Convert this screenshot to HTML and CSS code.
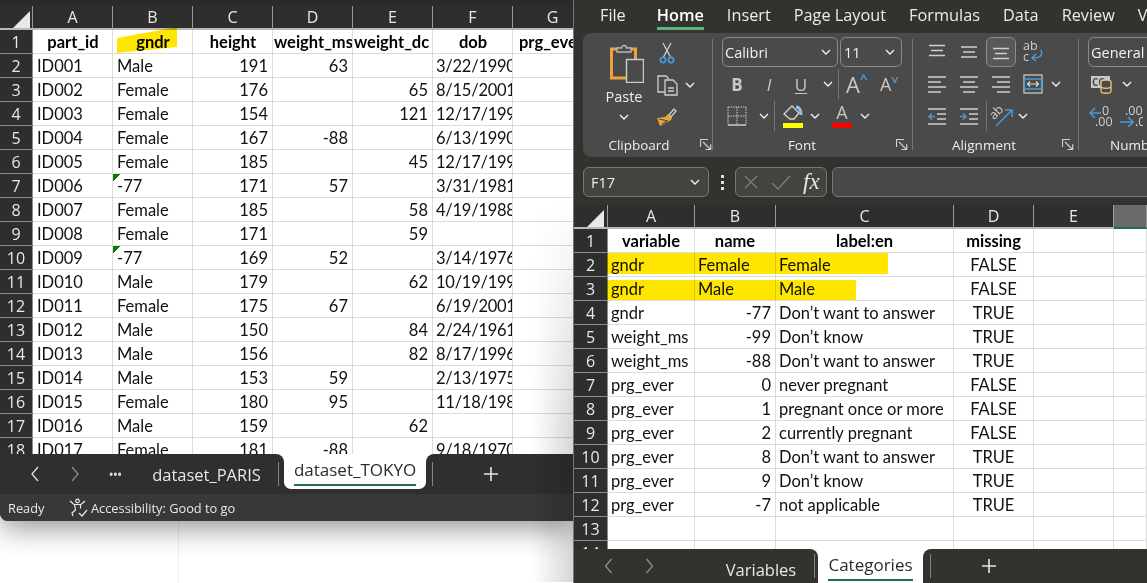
FILE: index.html
```html
<!DOCTYPE html>
<html lang="en">
<head>
  <meta charset="UTF-8">
  <title>Excel windows</title>
  <link rel="stylesheet" href="styles.css">
</head>
<body>

<svg class="defs" aria-hidden="true">
  <symbol id="chev" viewBox="0 0 10 6"><path d="M1 1l4 4 4-4" fill="none" stroke="#f0f0f0" stroke-width="1.4"/></symbol>
  <symbol id="launch" viewBox="0 0 12 12"><path d="M.5 8V.5H8M3 3l7 7M5.5 10.5h5.2V5.3" fill="none" stroke="#d0d0d0" stroke-width="1.2"/></symbol>
  <symbol id="lines-top" viewBox="0 0 20 16"><path d="M2 1.5h16M4 6.5h12M2 11.5h16" stroke="#cfcfcf" stroke-width="1.5"/></symbol>
  <symbol id="lines-mid" viewBox="0 0 20 16"><path d="M2 3h16M4 8h12M2 13h16" stroke="#cfcfcf" stroke-width="1.5"/></symbol>
  <symbol id="lines-bot" viewBox="0 0 20 16"><path d="M2 4.5h16M4 9.5h12M2 14.5h16" stroke="#cfcfcf" stroke-width="1.5"/></symbol>
  <symbol id="al-left" viewBox="0 0 20 18"><path d="M1 2h18M1 7h13M1 12h18M1 17h13" stroke="#cfcfcf" stroke-width="1.5"/></symbol>
  <symbol id="al-center" viewBox="0 0 20 18"><path d="M1 2h18M4 7h12M1 12h18M4 17h12" stroke="#cfcfcf" stroke-width="1.5"/></symbol>
  <symbol id="al-right" viewBox="0 0 20 18"><path d="M1 2h18M6 7h13M1 12h18M6 17h13" stroke="#cfcfcf" stroke-width="1.5"/></symbol>
  <symbol id="nav-l" viewBox="0 0 10 16"><path d="M8 1L2 8l6 7" fill="none" stroke="currentColor" stroke-width="1.3"/></symbol>
  <symbol id="nav-r" viewBox="0 0 10 16"><path d="M2 1l6 7-6 7" fill="none" stroke="currentColor" stroke-width="1.3"/></symbol>
  <symbol id="plus" viewBox="0 0 16 16"><path d="M8 1v14M1 8h14" stroke="#e6e6e6" stroke-width="1.6"/></symbol>
</svg>

<div class="desktop">

  <!-- left window, dataset sheet -->
  <section class="left-pane">
    <div class="book">
      <div class="sheet sheet-left">
        <div class="corner"></div>
        <div class="marker"></div>
        <table class="grid">
          <colgroup><col class="col-rh"><col class="col-80"><col class="col-80"><col class="col-80"><col class="col-80"><col class="col-80"><col class="col-80"><col class="col-80"></colgroup>
          <tr class="heads"><th></th><th>A</th><th>B</th><th>C</th><th>D</th><th>E</th><th>F</th><th>G</th></tr>
          <tr><th>1</th><td class="hd">part_id</td><td class="hd">gndr</td><td class="hd">height</td><td class="hd tight">weight_ms</td><td class="hd tight">weight_dc</td><td class="hd">dob</td><td class="hd tight pad">prg_ever</td></tr>
          <tr><th>2</th><td>ID001</td><td>Male</td><td class="n">191</td><td class="n">63</td><td></td><td class="d">3/22/1990</td><td></td></tr>
          <tr><th>3</th><td>ID002</td><td>Female</td><td class="n">176</td><td></td><td class="n">65</td><td class="d">8/15/2001</td><td></td></tr>
          <tr><th>4</th><td>ID003</td><td>Female</td><td class="n">154</td><td></td><td class="n">121</td><td class="d">12/17/1994</td><td></td></tr>
          <tr><th>5</th><td>ID004</td><td>Female</td><td class="n">167</td><td class="n">-88</td><td></td><td class="d">6/13/1990</td><td></td></tr>
          <tr><th>6</th><td>ID005</td><td>Female</td><td class="n">185</td><td></td><td class="n">45</td><td class="d">12/17/1994</td><td></td></tr>
          <tr><th>7</th><td>ID006</td><td class="flag">-77</td><td class="n">171</td><td class="n">57</td><td></td><td class="d">3/31/1981</td><td></td></tr>
          <tr><th>8</th><td>ID007</td><td>Female</td><td class="n">185</td><td></td><td class="n">58</td><td class="d">4/19/1988</td><td></td></tr>
          <tr><th>9</th><td>ID008</td><td>Female</td><td class="n">171</td><td></td><td class="n">59</td><td></td><td></td></tr>
          <tr><th>10</th><td>ID009</td><td class="flag">-77</td><td class="n">169</td><td class="n">52</td><td></td><td class="d">3/14/1976</td><td></td></tr>
          <tr><th>11</th><td>ID010</td><td>Male</td><td class="n">179</td><td></td><td class="n">62</td><td class="d">10/19/1995</td><td></td></tr>
          <tr><th>12</th><td>ID011</td><td>Female</td><td class="n">175</td><td class="n">67</td><td></td><td class="d">6/19/2001</td><td></td></tr>
          <tr><th>13</th><td>ID012</td><td>Male</td><td class="n">150</td><td></td><td class="n">84</td><td class="d">2/24/1961</td><td></td></tr>
          <tr><th>14</th><td>ID013</td><td>Male</td><td class="n">156</td><td></td><td class="n">82</td><td class="d">8/17/1996</td><td></td></tr>
          <tr><th>15</th><td>ID014</td><td>Male</td><td class="n">153</td><td class="n">59</td><td></td><td class="d">2/13/1975</td><td></td></tr>
          <tr><th>16</th><td>ID015</td><td>Female</td><td class="n">180</td><td class="n">95</td><td></td><td class="d">11/18/1987</td><td></td></tr>
          <tr><th>17</th><td>ID016</td><td>Male</td><td class="n">159</td><td></td><td class="n">62</td><td></td><td></td></tr>
          <tr><th>18</th><td>ID017</td><td>Female</td><td class="n">181</td><td class="n">-88</td><td></td><td class="d">9/18/1970</td><td></td></tr>
        </table>
      </div>

      <div class="tabs tabs-left">
        <div class="tab-side side-a">
          <svg class="nav"><use href="#nav-l"/></svg>
          <svg class="nav nav-dim"><use href="#nav-r"/></svg>
          <span class="more">•••</span>
          <span class="tab tab-paris">dataset_PARIS</span>
          <i class="tab-sep"></i>
        </div>
        <div class="tab-on tokyo"><span>dataset_TOKYO</span></div>
        <div class="tab-side side-b">
          <i class="tab-sep"></i>
          <svg class="plus"><use href="#plus"/></svg>
        </div>
      </div>

      <div class="status">
        <span class="ready">Ready</span>
        <svg class="a11y" viewBox="0 0 20 20" fill="none" stroke="#e8e8e8" stroke-width="1.2">
          <circle cx="8.5" cy="3" r="1.8"/>
          <path d="M1 3l4 3.5h7L16 3M5.5 6.5L6.5 12 3 15l1 3M11.5 6.5v4"/>
          <path d="M10 15l3 3 5-6"/>
        </svg>
        <span>Accessibility: Good to go</span>
      </div>
      <div class="edge-shade"></div>
    </div>
  </section>

  <!-- right window, codebook sheet -->
  <section class="right-pane">
    <nav class="menu">
      <span>File</span>
      <span class="menu-on">Home</span>
      <span>Insert</span>
      <span>Page Layout</span>
      <span>Formulas</span>
      <span>Data</span>
      <span>Review</span>
      <span>View</span>
    </nav>

    <div class="ribbon">

      <div class="group g-clip">
        <div class="clip-body">
          <div class="paste">
            <svg class="paste-ic" viewBox="0 0 34 40">
              <rect x="1.5" y="6" width="24" height="29" fill="none" stroke="#e9a53c" stroke-width="3"/>
              <path d="M7 9V5h4.5a2.5 2.5 0 0 1 5 0H21v4z" fill="#4a4a4a" stroke="#b8b8b8" stroke-width="1.3"/>
              <rect x="16.5" y="16.500" width="17" height="23" fill="#4a4a4a" stroke="#c8c8c8" stroke-width="1.5"/>
            </svg>
            <span>Paste</span>
            <svg class="chev"><use href="#chev"/></svg>
          </div>
          <div class="clip-tools">
            <div class="row">
              <svg class="tool-ic" width="24" height="22" viewBox="0 0 24 22" fill="none">
                <path d="M8 1l7.500 14M16 1L8.500 15" stroke="#cfcfcf" stroke-width="1.300"/>
                <circle cx="8" cy="18" r="2.600" stroke="#4a9ad8" stroke-width="1.600"/>
                <circle cx="16" cy="18" r="2.600" stroke="#4a9ad8" stroke-width="1.600"/>
              </svg>
            </div>
            <div class="row">
              <svg class="tool-ic" width="24" height="22" viewBox="0 0 24 22" fill="none" stroke="#cfcfcf" stroke-width="1.300">
                <path d="M11 18H3V2h8l3 3"/>
                <path d="M10 6h8l4 4v11H10z" fill="#4a4a4a"/>
                <path d="M13 14h6M13 17h6"/>
              </svg>
              <svg class="chev chev-r"><use href="#chev"/></svg>
            </div>
            <div class="row">
              <svg class="tool-ic" width="24" height="22" viewBox="0 0 24 22">
                <path d="M14 9l5-6 2 2-5 6z" fill="none" stroke="#cfcfcf" stroke-width="1.300"/>
                <path d="M13 8l4 4-1 2-11 6-3-8 8-1z" fill="#e9a53c"/>
                <path d="M4 13l9 2M7 18l5-3" stroke="#4a4a4a"/>
              </svg>
            </div>
          </div>
        </div>
        <div class="group-foot">
          <span class="foot-label w-clip">Clipboard</span>
          <svg class="launch"><use href="#launch"/></svg>
        </div>
      </div>

      <div class="group g-font">
        <div class="row font-pick">
          <div class="pick pick-font"><span>Calibri</span><svg class="chev"><use href="#chev"/></svg></div>
          <div class="pick pick-size"><span>11</span><svg class="chev"><use href="#chev"/></svg></div>
        </div>
        <div class="row row-tools">
          <span class="tool tx-b">B</span>
          <span class="tool tx-i">I</span>
          <span class="tool tx-u">U</span>
          <svg class="chev chev-r"><use href="#chev"/></svg>
          <i class="vline vl-font"></i>
          <span class="tool tx-a big">A<b>^</b></span>
          <span class="tool tx-a small">A<b class="down">^</b></span>
        </div>
        <div class="row row-tools">
          <span class="tool">
            <svg width="20" height="20" viewBox="0 0 20 20" fill="none" stroke="#cfcfcf" stroke-dasharray="1.500 1"><path d="M1 1h18M1 10h18M1 1v18M10 1v18M19 1v18"/><path d="M1 19h18" stroke-dasharray="none" stroke-width="1.500"/></svg>
          </span>
          <svg class="chev chev-r"><use href="#chev"/></svg>
          <i class="vline vl-fill"></i>
          <span class="tool tool-bar">
            <svg width="22" height="16" viewBox="0 0 22 16" fill="none" stroke="#d4d4d4" stroke-width="1.300"><path d="M2 9l8-8 7 7-5 6H8z"/><path d="M14 2c3 0 5 3 5 8" stroke="#8fc0e8" stroke-width="3"/></svg>
            <i class="bar bar-yellow"></i>
          </span>
          <svg class="chev chev-fill"><use href="#chev"/></svg>
          <span class="tool tool-bar color-a">
            <span class="tx-color">A</span>
            <i class="bar bar-red"></i>
          </span>
          <svg class="chev chev-color"><use href="#chev"/></svg>
        </div>
        <div class="group-foot">
          <span class="foot-label w-font">Font</span>
          <svg class="launch"><use href="#launch"/></svg>
        </div>
      </div>

      <div class="group g-align">
        <div class="row row-align">
          <span class="tool"><svg width="20" height="16"><use href="#lines-top"/></svg></span>
          <span class="tool"><svg width="20" height="16"><use href="#lines-mid"/></svg></span>
          <span class="tool tool-sel"><svg width="20" height="16"><use href="#lines-bot"/></svg></span>
          <span class="tool">
            <svg width="22" height="22" viewBox="0 0 22 22" fill="none">
              <text x="1" y="9" class="svg-tx">ab</text>
              <text x="1" y="20" class="svg-tx">c</text>
              <path d="M19 9c2 6-1 8-9 8M14 13l-4 4 4 3" stroke="#4a9ad8" stroke-width="1.500"/>
            </svg>
          </span>
        </div>
        <div class="row row-align">
          <span class="tool"><svg width="20" height="18"><use href="#al-left"/></svg></span>
          <span class="tool"><svg width="20" height="18"><use href="#al-center"/></svg></span>
          <span class="tool"><svg width="20" height="18"><use href="#al-right"/></svg></span>
          <span class="tool">
            <svg width="20" height="20" viewBox="0 0 20 20" fill="none">
              <path d="M1 1h18v18H1z" stroke="#b8b8b8" stroke-width="1.500"/>
              <path d="M1.500 5h17v10h-17z" stroke="#4a9ad8" stroke-width="1.500"/>
              <path d="M5 10h10M7 7.500L4.500 10 7 12.500M13 7.500l2.500 2.500-2.500 2.500" stroke="#e0e0e0" stroke-width="1.100"/>
            </svg>
          </span>
          <svg class="chev chev-merge"><use href="#chev"/></svg>
        </div>
        <div class="row row-align">
          <span class="tool">
            <svg width="20" height="18" viewBox="0 0 20 18" fill="none">
              <path d="M1 2h18M10 7h9M10 12h9M1 17h18" stroke="#cfcfcf" stroke-width="1.500"/>
              <path d="M8 9.500H2M5 6.500l-3 3 3 3" stroke="#4a9ad8" stroke-width="1.500"/>
            </svg>
          </span>
          <span class="tool">
            <svg width="20" height="18" viewBox="0 0 20 18" fill="none">
              <path d="M1 2h18M10 7h9M10 12h9M1 17h18" stroke="#cfcfcf" stroke-width="1.500"/>
              <path d="M1 9.500h6M4 6.500l3 3-3 3" stroke="#4a9ad8" stroke-width="1.500"/>
            </svg>
          </span>
          <i class="vline vl-align"></i>
          <span class="tool tool-orient">
            <svg width="24" height="24" viewBox="0 0 24 24" fill="none">
              <text x="0" y="13" class="svg-tx" transform="rotate(-45 6 10)">ab</text>
              <path d="M6 22L22 6M15 6h7v7" stroke="#4a9ad8" stroke-width="1.500"/>
            </svg>
          </span>
          <svg class="chev chev-orient"><use href="#chev"/></svg>
        </div>
        <div class="group-foot">
          <span class="foot-label w-align">Alignment</span>
          <svg class="launch"><use href="#launch"/></svg>
        </div>
      </div>

      <div class="group g-num">
        <div class="row"><div class="pick pick-num"><span>General</span></div></div>
        <div class="row row-num">
          <span class="tool tool-num">
            <svg width="22" height="20" viewBox="0 0 22 20" fill="none">
              <rect x="1" y="2" width="19" height="12" fill="#c8c8c8"/>
              <text x="2" y="12" class="svg-tx dark">CC</text>
              <ellipse cx="16" cy="8" rx="5" ry="2" fill="#4a4a4a" stroke="#f0c674" stroke-width="1.300"/>
              <path d="M11 8v9c0 3 10 3 10 0V8M11 12c0 3 10 3 10 0" fill="#4a4a4a" stroke="#f0c674" stroke-width="1.300"/>
            </svg>
          </span>
          <svg class="chev chev-num"><use href="#chev"/></svg>
        </div>
        <div class="row row-num">
          <span class="tool tool-num">
            <svg width="24" height="22" viewBox="0 0 24 22" fill="none">
              <path d="M12 8H2M6 3L1 8l5 5" stroke="#4a9ad8" stroke-width="1.500"/>
              <text x="13" y="10" class="svg-tx">0</text>
              <text x="6" y="21" class="svg-tx">.00</text>
            </svg>
          </span>
          <span class="tool tool-num second">
            <svg width="24" height="22" viewBox="0 0 24 22" fill="none">
              <text x="6" y="10" class="svg-tx">.00</text>
              <path d="M1 17h12M9 12l5 5-5 5" stroke="#4a9ad8" stroke-width="1.500"/>
              <text x="16" y="21" class="svg-tx">.0</text>
            </svg>
          </span>
        </div>
        <div class="group-foot num-foot"><span>Number</span></div>
      </div>
    </div>

    <div class="fbar">
      <div class="namebox"><span>F17</span><svg class="chev"><use href="#chev"/></svg></div>
      <div class="dots"><i></i><i></i><i></i></div>
      <div class="fx-box">
        <svg width="16" height="16" viewBox="0 0 18 18"><path d="M2 2l14 14M16 2L2 16" stroke="#7d7d7d" stroke-width="1.400"/></svg>
        <svg width="20" height="18" viewBox="0 0 20 18"><path d="M1 10l6 6L19 3" fill="none" stroke="#7d7d7d" stroke-width="1.400"/></svg>
        <span class="fx">fx</span>
      </div>
      <div class="finput"></div>
    </div>

    <div class="sheet sheet-right">
      <div class="corner"></div>
      <i class="paint paint-a"></i>
      <i class="paint paint-b"></i>
      <table class="grid">
        <colgroup><col class="col-rh-r"><col class="col-a"><col class="col-b"><col class="col-c"><col class="col-80"><col class="col-80"><col class="col-f"></colgroup>
        <tr class="heads"><th></th><th>A</th><th>B</th><th>C</th><th>D</th><th>E</th><th class="head-sel"></th></tr>
        <tr><th>1</th><td class="hd">variable</td><td class="hd">name</td><td class="hd">label:en</td><td class="hd">missing</td><td></td><td></td></tr>
        <tr><th>2</th><td>gndr</td><td>Female</td><td>Female</td><td class="c">FALSE</td><td></td><td></td></tr>
        <tr><th>3</th><td>gndr</td><td>Male</td><td>Male</td><td class="c">FALSE</td><td></td><td></td></tr>
        <tr><th>4</th><td>gndr</td><td class="n">-77</td><td>Don’t want to answer</td><td class="c">TRUE</td><td></td><td></td></tr>
        <tr><th>5</th><td>weight_ms</td><td class="n">-99</td><td>Don’t know</td><td class="c">TRUE</td><td></td><td></td></tr>
        <tr><th>6</th><td>weight_ms</td><td class="n">-88</td><td>Don’t want to answer</td><td class="c">TRUE</td><td></td><td></td></tr>
        <tr><th>7</th><td>prg_ever</td><td class="n">0</td><td>never pregnant</td><td class="c">FALSE</td><td></td><td></td></tr>
        <tr><th>8</th><td>prg_ever</td><td class="n">1</td><td>pregnant once or more</td><td class="c">FALSE</td><td></td><td></td></tr>
        <tr><th>9</th><td>prg_ever</td><td class="n">2</td><td>currently pregnant</td><td class="c">FALSE</td><td></td><td></td></tr>
        <tr><th>10</th><td>prg_ever</td><td class="n">8</td><td>Don’t want to answer</td><td class="c">TRUE</td><td></td><td></td></tr>
        <tr><th>11</th><td>prg_ever</td><td class="n">9</td><td>Don’t know</td><td class="c">TRUE</td><td></td><td></td></tr>
        <tr><th>12</th><td>prg_ever</td><td class="n">-7</td><td>not applicable</td><td class="c">TRUE</td><td></td><td></td></tr>
        <tr><th>13</th><td></td><td></td><td></td><td></td><td></td><td></td></tr>
        <tr><th>14</th><td></td><td></td><td></td><td></td><td></td><td></td></tr>
      </table>
    </div>

    <div class="tabs tabs-right">
      <div class="tab-side side-c">
        <svg class="nav nav-dim"><use href="#nav-l"/></svg>
        <svg class="nav nav-dim"><use href="#nav-r"/></svg>
        <span class="tab tab-vars">Variables</span>
        <i class="tab-sep"></i>
      </div>
      <div class="tab-on cats"><span>Categories</span></div>
      <div class="tab-side side-d">
        <i class="tab-sep"></i>
        <svg class="plus"><use href="#plus"/></svg>
      </div>
    </div>
  </section>

</div>

</body>
</html>
```

FILE: styles.css
```css
* { box-sizing: border-box; }
html, body { margin: 0; height: 100%; }
body {
  font-family: "Open Sans", "Noto Sans", sans-serif;
  background: #fff;
  overflow: hidden;
}
.defs { position: absolute; width: 0; height: 0; }
i { font-style: normal; display: block; }
svg { display: block; flex: none; }

.desktop { display: flex; width: 1147px; height: 583px; }

/* left window */
.left-pane {
  width: 573px;
  flex: none;
  height: 583px;
  background: linear-gradient(90deg, transparent 178px, #eeeeee 178px, #eeeeee 179px, transparent 179px), #fff;
}
.book {
  position: relative;
  height: 521px;
  display: flex;
  flex-direction: column;
  background: #2b2b2b;
  padding-top: 6px;
  border-bottom-left-radius: 8px;
  box-shadow: 0 6px 30px rgba(0, 0, 0, .45);
  border-bottom: 1px solid #5d5d5d;
}
.edge-shade {
  position: absolute;
  top: 200px;
  bottom: -62px;
  right: 0;
  width: 40px;
  background: linear-gradient(90deg, transparent, rgba(0, 0, 0, .16));
  -webkit-mask-image: linear-gradient(180deg, transparent, #000 60%);
  mask-image: linear-gradient(180deg, transparent, #000 60%);
}

/* sheets */
.sheet { position: relative; overflow: hidden; background: #fff; }
.sheet-left { height: 448px; flex: none; }
.sheet-right { height: 344px; flex: none; }
.grid {
  border-collapse: separate;
  border-spacing: 0;
  table-layout: fixed;
  width: 1px;
  font-family: Lato, "Open Sans", sans-serif;
  font-size: 16.5px;
  color: #111;
}
.grid tr { height: 24px; }
.grid th {
  background: #2e2e2e;
  color: #e8e8e8;
  font-family: "Open Sans", sans-serif;
  font-weight: 400;
  font-size: 16px;
  padding: 0;
  border-bottom: 1px solid #8a8a8a;
  border-right: 1px solid #8a8a8a;
}
.heads th { border-bottom: 2px solid #b8b8b8; border-right: 1px solid #9a9a9a; }
.grid td {
  padding: 1px 3px 0 4px;
  border-right: 1px solid #dcdcdc;
  border-bottom: 1px solid #dcdcdc;
  white-space: nowrap;
  overflow: hidden;
  height: 24px;
}
.sheet-right .grid td { padding-left: 3px; }
.grid td.n { text-align: right; padding-right: 4px; }
.grid td.c { text-align: center; }
.grid td.d { padding-left: 3px; padding-right: 0; letter-spacing: -.25px; }
.grid td.hd { font-weight: 700; text-align: center; color: #000; }
.grid td.tight { text-align: left; padding: 1px 0 0 1px; }
.grid td.pad { padding-left: 6px; }
.grid td.flag {
  background: linear-gradient(135deg, #0a7a0a 5px, transparent 5px) no-repeat;
}
.col-rh { width: 33px; }
.col-80 { width: 80px; }
.col-rh-r { width: 34px; }
.col-a { width: 87px; }
.col-b { width: 81px; }
.col-c { width: 178px; }
.col-f { width: 33px; }
.head-sel { background: #6a6a6a !important; border-bottom: 2px solid #1e7145 !important; }

.corner {
  position: absolute;
  left: 13px;
  top: 5px;
  width: 17px;
  height: 17px;
  background: #e8e8e8;
  clip-path: polygon(100% 0, 100% 100%, 0 100%);
  z-index: 2;
}
.marker {
  position: absolute;
  left: 117px;
  top: 21px;
  width: 60px;
  height: 26px;
  background: #ffe600;
  clip-path: polygon(0 42%, 100% 0, 100% 77%, 0 100%);
  mix-blend-mode: multiply;
  z-index: 2;
}
.paint {
  position: absolute;
  left: 33px;
  background: #ffe600;
  mix-blend-mode: multiply;
  z-index: 2;
}
.paint-a { top: 48px; width: 281px; height: 21px; }
.paint-b { top: 75px; width: 249px; height: 20px; }

/* sheet tabs */
.tabs { display: flex; background: #fff; flex: none; color: #e8e8e8; font-size: 16.5px; }
.tabs-left { height: 40px; }
.tabs-right { height: 34px; }
.tab-side { display: flex; align-items: center; background: #2f2f2f; }
.side-a { width: 284px; padding-left: 15px; border-top-right-radius: 8px; }
.side-b { flex: 1; padding-left: 6px; border-top-left-radius: 8px; }
.side-c { width: 244px; padding-left: 14px; background: #32332e; border-top-right-radius: 8px; }
.side-d { flex: 1; padding-left: 7px; background: #32332e; border-top-left-radius: 8px; }
.nav { width: 40px; height: 16px; color: #e0e0e0; }
.nav-dim { color: #8d8d8d; }
.more { width: 40px; text-align: center; font-size: 14px; letter-spacing: -1px; color: #d8d8d8; }
.tab { text-align: center; }
.tab-paris { width: 143px; padding-top: 1px; }
.tab-vars { width: 106px; margin-left: 38px; padding-top: 6px; }
.side-c .nav { width: 41px; }
.tab-sep { width: 1px; height: 24px; background: #858585; flex: none; }
.plus { width: 116px; height: 16px; }
.tab-on { background: #2f2f2f; color: #2b2b2b; font-size: 17px; font-weight: 500; }
.tokyo { width: 142px; height: 40px; }
.tokyo span {
  display: flex;
  justify-content: center;
  height: 35px;
  padding-top: 4px;
  background: #fff;
  border-radius: 0 0 7px 7px;
  position: relative;
}
.tokyo span::after {
  content: "";
  position: absolute;
  left: 10px;
  right: 10px;
  bottom: 3px;
  height: 2px;
  background: #1e7145;
}
.cats { width: 105px; background: #fff; text-align: center; padding-top: 4px; position: relative; }
.cats::after {
  content: "";
  position: absolute;
  left: 10px;
  right: 10px;
  top: 30px;
  height: 2px;
  background: #1e7145;
}

/* status bar */
.status {
  height: 27px;
  flex: none;
  display: flex;
  align-items: center;
  background: #383838;
  color: #e8e8e8;
  font-size: 12.8px;
  padding-left: 8px;
  border-bottom-left-radius: 8px;
}
.ready { width: 61px; }
.a11y { width: 20px; height: 20px; margin-right: 2px; }

/* right window */
.right-pane {
  width: 574px;
  flex: none;
  height: 583px;
  overflow: hidden;
  background: #32332e;
  border-left: 1px solid #777;
  position: relative;
}
.menu {
  height: 33px;
  display: flex;
  gap: 23px;
  padding-left: 26px;
  color: #ececec;
  font-size: 16.3px;
  white-space: nowrap;
  line-height: 30px;
}
.menu-on { font-weight: 600; color: #fff; position: relative; margin-left: 8px; }
.menu-on::after {
  content: "";
  position: absolute;
  left: 0;
  right: 0;
  top: 27px;
  height: 3px;
  background: #5fb37f;
}

.ribbon {
  margin-left: 9px;
  width: 640px;
  height: 124px;
  background: #4a4a4a;
  border-radius: 8px 0 0 8px;
  display: flex;
  color: #ededed;
  font-size: 14px;
}
.group {
  position: relative;
  flex: none;
  display: grid;
  grid-template-rows: 30px 30px 30px 24px;
  row-gap: 2px;
  padding-top: 4px;
}
.group::after {
  content: "";
  position: absolute;
  right: 0;
  top: 6px;
  height: 111px;
  width: 1px;
  background: #777;
}
.g-num::after { display: none; }
.g-clip { width: 130px; }
.g-font { width: 200px; }
.g-align { width: 166px; }
.g-num { width: 120px; }

.row { display: flex; align-items: center; }
.clip-body { grid-row: 1 / span 3; display: flex; padding-left: 10px; }
.paste {
  width: 62px;
  display: flex;
  flex-direction: column;
  align-items: center;
  padding-top: 6px;
}
.paste-ic { width: 34px; height: 40px; margin-left: 6px; }
.paste span { font-size: 14.5px; margin-top: 4px; line-height: 20px; }
.paste .chev { margin-top: 7px; }
.clip-tools { display: grid; grid-template-rows: 32px 32px 32px; }
.chev { width: 10px; height: 6px; }
svg.chev { color: #eee; }
.chev-r { margin-left: 6px; }

.group-foot { grid-row: 4; display: flex; align-items: center; }
.foot-label { text-align: center; font-size: 13.5px; }
.w-clip { width: 112px; }
.w-font { width: 178px; }
.w-align { width: 142px; }
.launch { width: 12px; height: 12px; margin-left: 5px; }
.w-align + .launch { margin-left: 7px; }
.num-foot { padding-left: 31px; white-space: nowrap; font-size: 13.5px; }

.font-pick { padding-left: 9px; gap: 2px; }
.pick {
  height: 30px;
  border: 1px solid #8a8a8a;
  border-radius: 6px;
  display: flex;
  align-items: center;
  justify-content: space-between;
  padding: 0 6px 0 2px;
  font-size: 14.5px;
  color: #f2f2f2;
}
.pick-font { width: 116px; }
.pick-size { width: 62px; padding-left: 3px; }
.pick-num { width: 110px; margin-left: 9px; }

.tool {
  width: 32px;
  height: 30px;
  flex: none;
  display: flex;
  align-items: center;
  justify-content: center;
  color: #c8c8c8;
  position: relative;
}
.row-tools { padding-left: 8px; }
.row-align { padding-left: 8px; }
.tx-b { font-weight: 700; font-size: 17px; }
.tx-i { font-style: italic; font-size: 17px; }
.tx-u { text-decoration: underline; font-size: 17px; text-underline-offset: 2px; }
.tx-a { font-size: 22px; width: 33px; justify-content: flex-start; padding-left: 7px; }
.tx-a.small { font-size: 18px; padding-left: 8px; }
.tx-a b { color: #4a9ad8; font-size: 13px; font-weight: 700; align-self: flex-start; line-height: 18px; }
.tx-a b.down { transform: rotate(180deg); align-self: flex-start; line-height: 12px; margin-top: 4px; }
.vline { width: 1px; height: 30px; background: #777; flex: none; }
.vl-font { margin: 0 0 0 5px; }
.vl-fill { margin: 0 0 0 5px; }
.vl-align { margin: 0 0 0 1px; }
.tool-bar { flex-direction: column; gap: 2px; width: 26px; margin-left: 5px; }
.tool-bar .bar { width: 20px; height: 5px; }
.bar-yellow { background: #ffff00; }
.bar-red { background: #ff0000; }
.chev-fill { margin-left: 4px; }
.color-a { margin-left: 9px; }
.tx-color { font-size: 18px; line-height: 15px; height: 16px; }
.chev-color { margin-left: 5px; }
.tool-sel::before {
  content: "";
  position: absolute;
  left: 1px;
  right: 1px;
  top: 0;
  bottom: 0;
  border: 1px solid #8f8f8f;
  border-radius: 6px;
  background: #585858;
}
.tool-sel svg { position: relative; }
.chev-merge { margin-left: 2px; }
.tool-orient { width: 30px; }
.chev-orient { margin-left: 1px; }
.svg-tx { font: 12.5px "Open Sans", sans-serif; fill: #cfcfcf; }
.svg-tx.dark { fill: #4a4a4a; font-size: 10px; font-weight: 700; }
.row-num { padding-left: 9px; }
.tool-num { width: 24px; margin-left: 1px; }
.chev-num { margin-left: 9px; }
.second { margin-left: 6px; }

/* formula bar */
.fbar {
  display: flex;
  align-items: stretch;
  height: 30px;
  margin: 10px 0 8px 9px;
  width: 640px;
  color: #eee;
}
.namebox, .fx-box, .finput {
  border: 1px solid #777;
  border-radius: 6px;
  background: #43433f;
}
.namebox {
  width: 126px;
  display: flex;
  align-items: center;
  justify-content: space-between;
  padding: 0 8px 0 7px;
  font-size: 14.5px;
}
.dots { width: 26px; display: flex; flex-direction: column; gap: 3px; align-items: center; justify-content: center; }
.dots i { width: 3px; height: 3px; background: #e0e0e0; }
.fx-box {
  width: 92px;
  display: flex;
  align-items: center;
  gap: 12px;
  padding-left: 7px;
}
.fx { font: italic 23px "Liberation Serif", serif; color: #e8e8e8; margin-left: 0; line-height: 24px; }
.finput { flex: 1; margin-left: 5px; background: #484848; }
```
